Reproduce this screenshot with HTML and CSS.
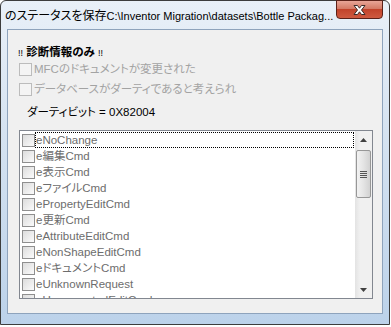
FILE: index.html
```html
<!DOCTYPE html>
<html lang="ja">
<head>
    <meta charset="UTF-8">
    <meta name="viewport" content="width=device-width, initial-scale=1.0">
    <title>のステータスを保存</title>
    <link rel="stylesheet" href="styles.css">
</head>
<body>
    <div class="window">
        <div class="titlebar">
            <span class="title">のステータスを保存<span class="path">C:\Inventor Migration\datasets\Bottle Packag...</span></span>
            <div class="close">
                <svg width="17" height="12" viewBox="0 0 17 12">
                    <path d="M3 1.5 L6.5 1.5 L8.5 4.2 L10.5 1.5 L14 1.5 L10.5 6 L14 10.5 L10.5 10.5 L8.5 7.8 L6.5 10.5 L3 10.5 L6.5 6 Z" fill="#fff" stroke="#3b2a28" stroke-width="1" stroke-linejoin="round"/>
                </svg>
            </div>
        </div>
        <div class="client">
            <div class="heading"><span class="bang">!!</span> 診断情報のみ <span class="bang">!!</span></div>
            <div class="check disabled"><span class="box"></span>MFCのドキュメントが変更された</div>
            <div class="check disabled"><span class="box"></span>データベースがダーティであると考えられ</div>
            <div class="dirty">ダーティビット = 0X82004</div>
            <div class="listbox">
                <ul class="items">
                    <li class="item"><span class="box"></span><span class="label focused">eNoChange</span></li>
                    <li class="item"><span class="box"></span><span class="label">e編集Cmd</span></li>
                    <li class="item"><span class="box"></span><span class="label">e表示Cmd</span></li>
                    <li class="item"><span class="box"></span><span class="label">eファイルCmd</span></li>
                    <li class="item"><span class="box"></span><span class="label">ePropertyEditCmd</span></li>
                    <li class="item"><span class="box"></span><span class="label">e更新Cmd</span></li>
                    <li class="item"><span class="box"></span><span class="label">eAttributeEditCmd</span></li>
                    <li class="item"><span class="box"></span><span class="label">eNonShapeEditCmd</span></li>
                    <li class="item"><span class="box"></span><span class="label">eドキュメントCmd</span></li>
                    <li class="item"><span class="box"></span><span class="label">eUnknownRequest</span></li>
                    <li class="item"><span class="box"></span><span class="label">eUnsupportedEditCmd</span></li>
                </ul>
                <div class="scrollbar">
                    <div class="arrow">
                        <svg width="7" height="4" viewBox="0 0 7 4"><path d="M0 4 L3.5 0 L7 4 Z" fill="#404040"/></svg>
                    </div>
                    <div class="thumb">
                        <span class="grip"></span>
                        <span class="grip"></span>
                        <span class="grip"></span>
                        <span class="grip"></span>
                    </div>
                    <div class="track"></div>
                    <div class="arrow">
                        <svg width="7" height="4" viewBox="0 0 7 4"><path d="M0 0 L7 0 L3.5 4 Z" fill="#404040"/></svg>
                    </div>
                </div>
            </div>
        </div>
    </div>
</body>
</html>
```

FILE: styles.css
```css
body {
    margin: 0;
    background-color: #fff;
    font-family: "Liberation Sans", "Noto Sans CJK JP", sans-serif;
    font-size: 11.5px;
    font-feature-settings: "palt" 1;
}
.window {
    width: 390px;
    height: 325px;
    box-sizing: border-box;
    border: 1px solid #3d3d3d;
    border-radius: 6px 6px 0 0;
    background: linear-gradient(#e9f0f8, #d6e3f1 40%, #bcd2ea);
    display: flex;
    flex-direction: column;
    padding: 0 6px 10px 6px;
}
.titlebar {
    height: 28px;
    display: flex;
    justify-content: space-between;
    align-items: flex-start;
}
.title {
    margin: 7px 0 0 -2px;
    font-size: 12px;
    line-height: 16px;
    color: #000;
    white-space: nowrap;
    overflow: hidden;
}
.path {
    font-size: 11px;
}
.close {
    flex: none;
    width: 47px;
    height: 19px;
    margin: -1px 0 0 0;
    box-sizing: border-box;
    border: 1px solid #5b2119;
    border-radius: 0 0 4px 4px;
    background: linear-gradient(#e8a597, #d47a66 45%, #c2432b 50%, #cf5a40);
    display: flex;
    justify-content: center;
    align-items: center;
}
.client {
    flex: 1;
    background-color: #f0f0f0;
    border: 1px solid #8ea3bc;
    padding: 14px 0 0 10px;
    display: flex;
    flex-direction: column;
    align-items: flex-start;
}
.heading {
    line-height: 16px;
    font-weight: bold;
    color: #000;
}
.bang {
    font-size: 9px;
    font-weight: normal;
}
.check {
    display: flex;
    align-items: center;
    line-height: 16px;
    margin-left: 1px;
}
.check:first-of-type {
    margin-top: 2px;
}
.check + .check {
    margin-top: 4px;
}
.check .box {
    margin-right: 2px;
}
.disabled {
    color: #a3a3a3;
}
.box {
    width: 11px;
    height: 11px;
    border: 1px solid #8f8f8f;
    background: linear-gradient(135deg, #dcdcdc, #fbfbfb);
    flex: none;
}
.disabled .box {
    border-color: #bcbcbc;
    background: #f4f4f4;
}
.dirty {
    margin: 7px 0 0 9px;
    line-height: 16px;
    color: #000;
}
.listbox {
    margin: 10px 0 0 1px;
    width: 354px;
    height: 169px;
    box-sizing: border-box;
    border: 1px solid #828790;
    background-color: #fff;
    display: flex;
    overflow: hidden;
}
.items {
    flex: 1;
    list-style: none;
    margin: 0;
    padding: 1px 1px 0 2px;
}
.item {
    height: 16px;
    display: flex;
    align-items: center;
    color: #6d6d6d;
}
.label {
    flex: 1;
    line-height: 14px;
    border: 1px dotted transparent;
}
.label.focused {
    border-color: #000;
}
.scrollbar {
    width: 17px;
    display: flex;
    flex-direction: column;
    background: linear-gradient(90deg, #e3e3e3, #f0f0f0 30%, #f0f0f0);
}
.arrow {
    height: 17px;
    display: flex;
    justify-content: center;
    align-items: center;
}
.thumb {
    height: 48px;
    margin: 2px 1px 0 1px;
    box-sizing: border-box;
    border: 1px solid #979797;
    border-radius: 2px;
    background: linear-gradient(90deg, #f2f2f2, #e4e4e4 50%, #d2d2d2);
    display: flex;
    flex-direction: column;
    align-items: center;
    justify-content: center;
    gap: 1px;
}
.grip {
    width: 7px;
    height: 1px;
    background-color: #555;
}
.track {
    flex: 1;
}
```
